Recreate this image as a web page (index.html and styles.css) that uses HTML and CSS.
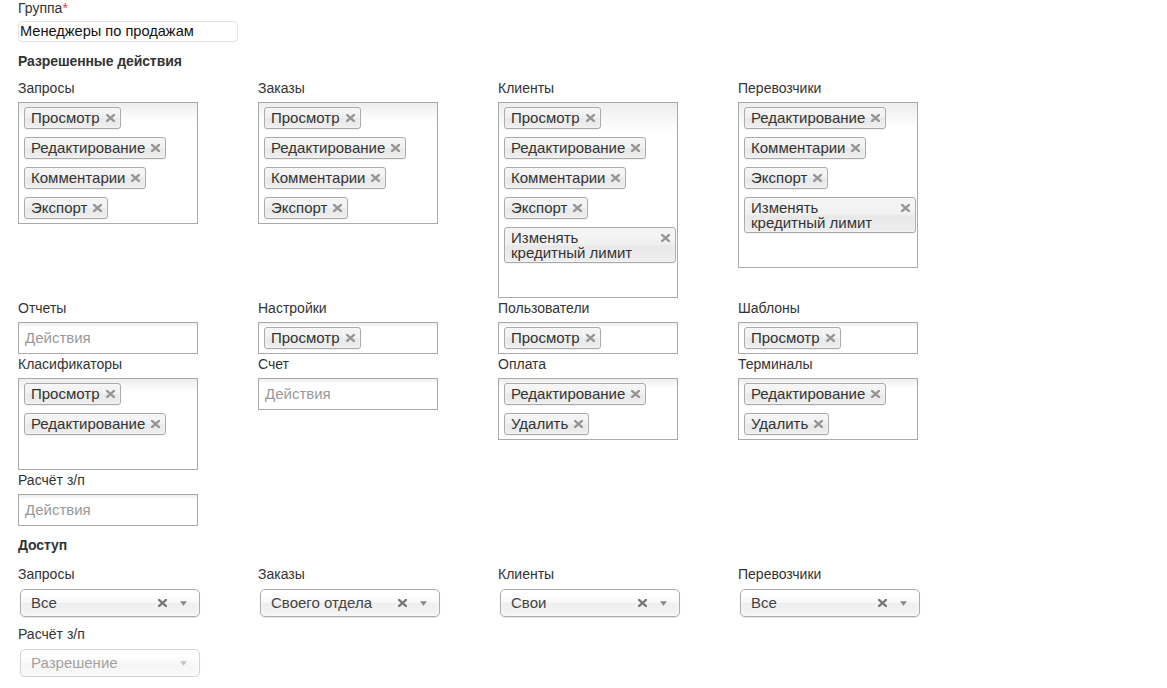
FILE: index.html
```html
<!DOCTYPE html>
<html lang="ru">
<head>
<meta charset="utf-8">
<title>Группа</title>
<link rel="stylesheet" href="styles.css">
</head>
<body>
<svg width="0" height="0" class="defs">
  <defs>
    <symbol id="x" viewBox="0 0 10 10" preserveAspectRatio="none"><path d="M1 1 L9 9 M9 1 L1 9" stroke="currentColor" stroke-width="2.8" stroke-linecap="square" fill="none"/></symbol>
    <symbol id="arr" viewBox="0 0 8 5"><path d="M0 0 H8 L4 5 Z" fill="currentColor"/></symbol>
  </defs>
</svg>
<div class="page">
  <div class="lbl">Группа<span class="req">*</span></div>
  <div class="text-input">Менеджеры по продажам</div>

  <div class="section">Разрешенные действия</div>
  <div class="grid">
    <div class="cell">
      <div class="lbl">Запросы</div>
      <ul class="choices">
        <li class="tag">Просмотр<svg class="rm"><use href="#x"/></svg></li>
        <li class="tag">Редактирование<svg class="rm"><use href="#x"/></svg></li>
        <li class="tag">Комментарии<svg class="rm"><use href="#x"/></svg></li>
        <li class="tag">Экспорт<svg class="rm"><use href="#x"/></svg></li>
        <li class="search"></li>
      </ul>
    </div>
    <div class="cell">
      <div class="lbl">Заказы</div>
      <ul class="choices">
        <li class="tag">Просмотр<svg class="rm"><use href="#x"/></svg></li>
        <li class="tag">Редактирование<svg class="rm"><use href="#x"/></svg></li>
        <li class="tag">Комментарии<svg class="rm"><use href="#x"/></svg></li>
        <li class="tag">Экспорт<svg class="rm"><use href="#x"/></svg></li>
        <li class="search"></li>
      </ul>
    </div>
    <div class="cell">
      <div class="lbl">Клиенты</div>
      <ul class="choices">
        <li class="tag">Просмотр<svg class="rm"><use href="#x"/></svg></li>
        <li class="tag">Редактирование<svg class="rm"><use href="#x"/></svg></li>
        <li class="tag">Комментарии<svg class="rm"><use href="#x"/></svg></li>
        <li class="tag">Экспорт<svg class="rm"><use href="#x"/></svg></li>
        <li class="tag wide">Изменять<br>кредитный лимит<svg class="rm"><use href="#x"/></svg></li>
        <li class="search"></li>
      </ul>
    </div>
    <div class="cell">
      <div class="lbl">Перевозчики</div>
      <ul class="choices">
        <li class="tag">Редактирование<svg class="rm"><use href="#x"/></svg></li>
        <li class="tag">Комментарии<svg class="rm"><use href="#x"/></svg></li>
        <li class="tag">Экспорт<svg class="rm"><use href="#x"/></svg></li>
        <li class="tag wide">Изменять<br>кредитный лимит<svg class="rm"><use href="#x"/></svg></li>
        <li class="search"></li>
      </ul>
    </div>

    <div class="cell">
      <div class="lbl">Отчеты</div>
      <ul class="choices">
        <li class="search ph">Действия</li>
      </ul>
    </div>
    <div class="cell">
      <div class="lbl">Настройки</div>
      <ul class="choices">
        <li class="tag">Просмотр<svg class="rm"><use href="#x"/></svg></li>
        <li class="search"></li>
      </ul>
    </div>
    <div class="cell">
      <div class="lbl">Пользователи</div>
      <ul class="choices">
        <li class="tag">Просмотр<svg class="rm"><use href="#x"/></svg></li>
        <li class="search"></li>
      </ul>
    </div>
    <div class="cell">
      <div class="lbl">Шаблоны</div>
      <ul class="choices">
        <li class="tag">Просмотр<svg class="rm"><use href="#x"/></svg></li>
        <li class="search"></li>
      </ul>
    </div>

    <div class="cell">
      <div class="lbl">Класификаторы</div>
      <ul class="choices">
        <li class="tag">Просмотр<svg class="rm"><use href="#x"/></svg></li>
        <li class="tag">Редактирование<svg class="rm"><use href="#x"/></svg></li>
        <li class="search"></li>
      </ul>
    </div>
    <div class="cell">
      <div class="lbl">Счет</div>
      <ul class="choices">
        <li class="search ph">Действия</li>
      </ul>
    </div>
    <div class="cell">
      <div class="lbl">Оплата</div>
      <ul class="choices">
        <li class="tag">Редактирование<svg class="rm"><use href="#x"/></svg></li>
        <li class="tag">Удалить<svg class="rm"><use href="#x"/></svg></li>
        <li class="search"></li>
      </ul>
    </div>
    <div class="cell">
      <div class="lbl">Терминалы</div>
      <ul class="choices">
        <li class="tag">Редактирование<svg class="rm"><use href="#x"/></svg></li>
        <li class="tag">Удалить<svg class="rm"><use href="#x"/></svg></li>
        <li class="search"></li>
      </ul>
    </div>

    <div class="cell">
      <div class="lbl">Расчёт з/п</div>
      <ul class="choices">
        <li class="search ph">Действия</li>
      </ul>
    </div>
  </div>

  <div class="section access">Доступ</div>
  <div class="grid grid-access">
    <div class="cell">
      <div class="lbl">Запросы</div>
      <div class="select"><span class="val">Все</span><svg class="clr"><use href="#x"/></svg><svg class="arr"><use href="#arr"/></svg></div>
    </div>
    <div class="cell">
      <div class="lbl">Заказы</div>
      <div class="select"><span class="val">Своего отдела</span><svg class="clr"><use href="#x"/></svg><svg class="arr"><use href="#arr"/></svg></div>
    </div>
    <div class="cell">
      <div class="lbl">Клиенты</div>
      <div class="select"><span class="val">Свои</span><svg class="clr"><use href="#x"/></svg><svg class="arr"><use href="#arr"/></svg></div>
    </div>
    <div class="cell">
      <div class="lbl">Перевозчики</div>
      <div class="select"><span class="val">Все</span><svg class="clr"><use href="#x"/></svg><svg class="arr"><use href="#arr"/></svg></div>
    </div>
    <div class="cell">
      <div class="lbl">Расчёт з/п</div>
      <div class="select disabled"><span class="val">Разрешение</span><svg class="arr"><use href="#arr"/></svg></div>
    </div>
  </div>
</div>
</body>
</html>
```

FILE: styles.css
```css
* { box-sizing: border-box; }
html, body { margin: 0; padding: 0; background: #fff; }
body {
  font-family: "Liberation Sans", Arial, sans-serif;
  font-size: 14px;
  color: #333;
}
.defs { position: absolute; width: 0; height: 0; overflow: hidden; }
.page { padding: 0 0 0 18px; }

.lbl {
  font-size: 14px;
  line-height: 16px;
  color: #333;
}
.req { color: #e8413b; }

.text-input {
  width: 220px;
  height: 21px;
  margin-top: 5px;
  border: 1px solid #e2e2e2;
  border-radius: 4px;
  padding: 0 1px;
  font-size: 14.6px;
  line-height: 19px;
  color: #111;
}

.section {
  font-weight: bold;
  font-size: 14px;
  line-height: 18px;
  margin-top: 10px;
  color: #333;
  letter-spacing: -0.1px;
}
.section.access { margin-top: 10px; }

.grid {
  display: grid;
  grid-template-columns: repeat(4, 240px);
  row-gap: 1px;
  margin-top: 9px;
  align-items: start;
}
.grid .lbl { line-height: 18px; margin-bottom: 5px; }

.choices {
  list-style: none;
  margin: 0;
  width: 180px;
  padding: 0 1px 0 5px;
  border: 1px solid #aaa;
  background: linear-gradient(#eee 1%, #fff 15%);
  display: flex;
  flex-wrap: wrap;
  column-gap: 5px;
  align-items: flex-start;
}
.tag {
  position: relative;
  margin: 4px 0;
  padding: 2px 20px 2px 6px;
  border: 1px solid #aaa;
  border-radius: 3px;
  background: linear-gradient(#f4f4f4 20%, #f0f0f0 50%, #e8e8e8 52%, #eee);
  box-shadow: 0 0 2px #fff inset, 0 1px 0 rgba(0,0,0,.05);
  font-size: 15px;
  line-height: 16px;
  color: #333;
  white-space: nowrap;
}
.tag.wide { flex: 1 1 100%; white-space: normal; line-height: 15px; }
.rm {
  position: absolute;
  right: 5px;
  top: 6px;
  width: 9px;
  height: 8px;
  color: #959595;
}
.search {
  width: 40px;
  height: 22px;
  margin: 4px 0;
}
.search.ph {
  width: 120px;
  padding-left: 1px;
  font-size: 15px;
  line-height: 22px;
  color: #999;
}

.grid-access { margin-top: 11px; row-gap: 8px; }
.grid-access .lbl { margin-bottom: 6px; }
.select {
  position: relative;
  margin-left: 2px;
  width: 180px;
  height: 28px;
  border: 1px solid #aaa;
  border-radius: 5px;
  background: linear-gradient(#fff 20%, #f6f6f6 50%, #eee 52%, #f4f4f4 100%);
  box-shadow: 0 0 3px #fff inset, 0 1px 1px rgba(0,0,0,.1);
  padding-left: 10px;
  font-size: 15px;
  line-height: 26px;
  color: #444;
}
.clr {
  position: absolute;
  right: 32px;
  top: 9px;
  width: 9px;
  height: 8px;
  color: #7a7a7a;
}
.arr {
  position: absolute;
  right: 12px;
  top: 11px;
  width: 7px;
  height: 5px;
  color: #888;
}
.select.disabled { opacity: .5; }
```
